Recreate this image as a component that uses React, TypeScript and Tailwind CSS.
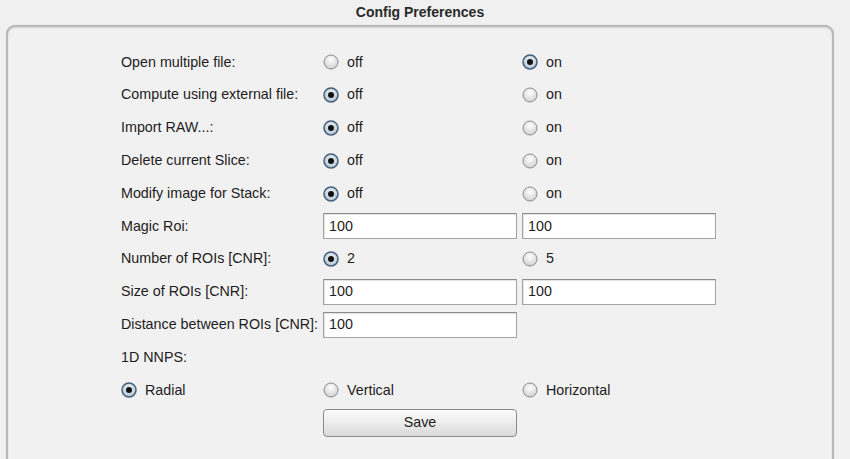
function Radio({ checked }: { checked?: boolean }) {
  return (
    <svg width="16" height="16" viewBox="0 0 16 16" className="shrink-0">
      <defs>
        <radialGradient id="rOff" cx="50%" cy="35%" r="65%">
          <stop offset="0%" stopColor="#ffffff" />
          <stop offset="100%" stopColor="#d0d0d0" />
        </radialGradient>
        <radialGradient id="rOn" cx="50%" cy="40%" r="60%">
          <stop offset="0%" stopColor="#f4f8fb" />
          <stop offset="100%" stopColor="#aebfd0" />
        </radialGradient>
      </defs>
      {checked ? (
        <>
          <circle cx="8" cy="8" r="7" fill="url(#rOn)" stroke="#44607a" strokeWidth="1.5" />
          <circle cx="8" cy="8" r="3" fill="#111" />
        </>
      ) : (
        <circle cx="8" cy="8" r="7" fill="url(#rOff)" stroke="#8a8c91" strokeWidth="1" />
      )}
    </svg>
  );
}

function Opt({ label, checked }: { label: string; checked?: boolean }) {
  return (
    <div className="flex items-center gap-[8px]">
      <Radio checked={checked} />
      <span>{label}</span>
    </div>
  );
}

function Field({ value }: { value: string }) {
  return (
    <div className="w-[194px] h-[26px] bg-white border border-[#a3a3a3] border-t-[#8c8c8c] shadow-[inset_1px_1px_0_#e2e2e2] flex items-center px-[5px]">
      {value}
    </div>
  );
}

type Row = { label?: string; a?: React.ReactNode; b?: React.ReactNode };

const rows: Row[] = [
  { label: "Open multiple file:", a: <Opt label="off" />, b: <Opt label="on" checked /> },
  { label: "Compute using external file:", a: <Opt label="off" checked />, b: <Opt label="on" /> },
  { label: "Import RAW...:", a: <Opt label="off" checked />, b: <Opt label="on" /> },
  { label: "Delete current Slice:", a: <Opt label="off" checked />, b: <Opt label="on" /> },
  { label: "Modify image for Stack:", a: <Opt label="off" checked />, b: <Opt label="on" /> },
  { label: "Magic Roi:", a: <Field value="100" />, b: <Field value="100" /> },
  { label: "Number of ROIs [CNR]:", a: <Opt label="2" checked />, b: <Opt label="5" /> },
  { label: "Size of ROIs [CNR]:", a: <Field value="100" />, b: <Field value="100" /> },
  { label: "Distance between ROIs [CNR]:", a: <Field value="100" /> },
  { label: "1D NNPS:" },
  { label: undefined, a: <Opt label="Vertical" />, b: <Opt label="Horizontal" /> },
];

export default function App() {
  return (
    <div className="w-[850px] h-[459px] overflow-hidden bg-[#f0f0f0] font-['Liberation_Sans',Arial,sans-serif] text-[14.3px] text-[#1e1c22]">
      <div className="h-[25px] flex items-center justify-center pr-[10px] font-bold text-[14px] text-[#2a2a2a]">
        Config Preferences
      </div>
      <div className="ml-[6px] w-[828px] h-[460px] rounded-t-[9px] border-2 border-[#b8b8b8] shadow-[inset_0_1px_2px_rgba(0,0,0,0.12),0_0_1px_rgba(0,0,0,0.2)] bg-[#f1f1f1] pt-[19px] pl-[113px]">
        {rows.map((r, i) => (
          <div key={i} className="h-[32.8px] flex items-center">
            <div className="w-[202px] shrink-0 whitespace-nowrap">
              {r.label ?? <Opt label="Radial" checked />}
            </div>
            <div className="w-[199px] shrink-0">{r.a}</div>
            <div>{r.b}</div>
          </div>
        ))}
        <div className="h-[32.8px] flex items-center pl-[202px]">
          <button className="w-[194px] h-[28px] rounded-[4px] border border-[#8a8a8a] bg-gradient-to-b from-[#fbfbfb] via-[#ececec] to-[#d9d9d9] shadow-[inset_0_1px_0_#ffffff]">
            Save
          </button>
        </div>
      </div>
    </div>
  );
}
